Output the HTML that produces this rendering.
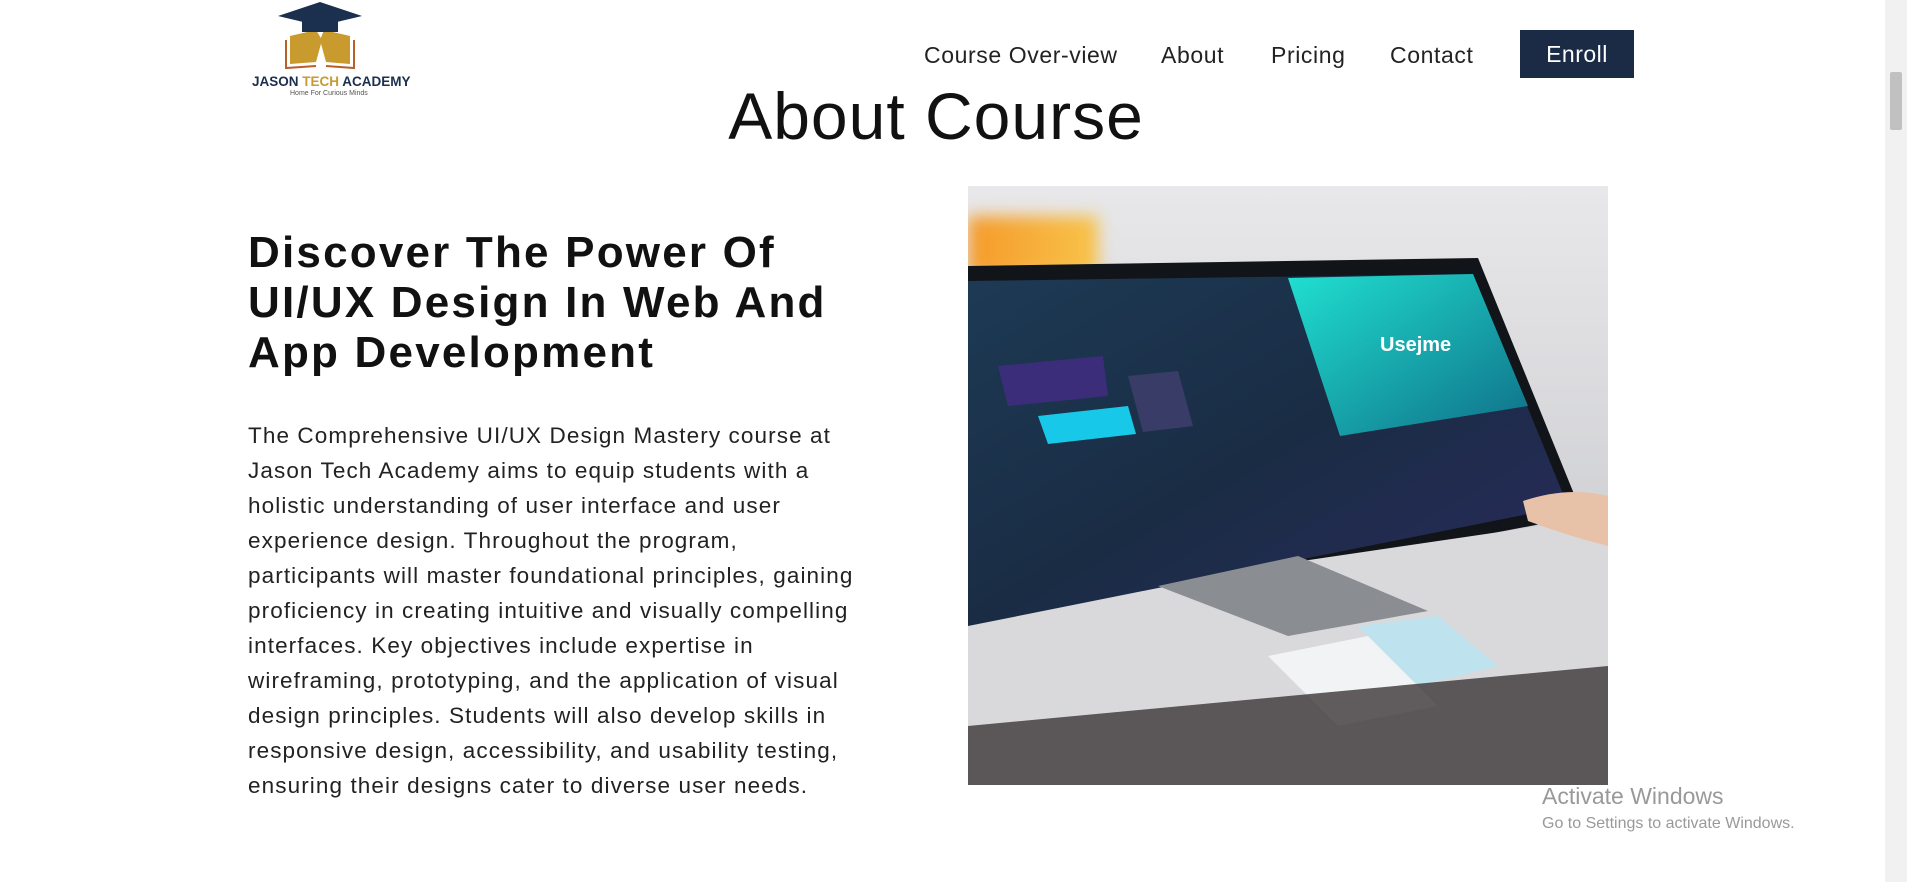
<!DOCTYPE html>
<html><head><meta charset="utf-8"><style>
*{margin:0;padding:0;box-sizing:border-box}
body{width:1907px;height:882px;overflow:hidden;background:#fff;font-family:"Liberation Sans",sans-serif;color:#111;position:relative}
.nav a{position:absolute;top:42px;font-size:23px;color:#222;text-decoration:none;letter-spacing:.6px}
.btn{position:absolute;left:1520px;top:30px;width:114px;height:48px;background:#1b2a45;color:#fff;font-size:23px;display:flex;align-items:center;justify-content:center;letter-spacing:.5px}
h1{position:absolute;left:0;width:1872px;text-align:center;top:78px;font-size:66px;font-weight:400;color:#111;letter-spacing:1px}
h2{position:absolute;left:248px;top:228px;font-size:44px;line-height:50px;font-weight:700;letter-spacing:2.2px;white-space:nowrap}
p{position:absolute;left:248px;top:418px;font-size:22.5px;line-height:35px;color:#222;white-space:nowrap;letter-spacing:1.1px}
.img{position:absolute;left:968px;top:186px;width:640px;height:599px;overflow:hidden;background:linear-gradient(180deg,#e8e8ea 0%,#dcdcdf 30%,#cfd0d3 60%,#3a3438 100%)}
.sb{position:absolute;right:0;top:0;width:22px;height:882px;background:#f1f1f1}
.sb div{position:absolute;left:5px;top:72px;width:12px;height:58px;background:#c1c1c1;border-radius:2px}
</style></head><body>
<svg style="position:absolute;left:250px;top:0" width="170" height="98" viewBox="0 0 170 98">
<path d="M40 36 L66 30 L72 40 L66 62 L40 64 Z" fill="#c99a2e"/>
<path d="M100 36 L74 30 L70 40 L76 62 L100 64 Z" fill="#c99a2e"/>
<path d="M36 40 L36 68 L66 66 M104 40 L104 68 L76 66" stroke="#b8602a" stroke-width="2" fill="none"/>
<path d="M70 2 L112 16 L70 26 L28 16 Z" fill="#1b2f4e"/>
<rect x="52" y="16" width="36" height="16" fill="#1b2f4e"/>
<text x="2" y="86" font-family="Liberation Sans" font-weight="700" font-size="13.5" fill="#1b2f4e">JASON <tspan fill="#c99a2e">TECH</tspan> ACADEMY</text>
<text x="40" y="95" font-family="Liberation Sans" font-size="7" fill="#555">Home For Curious Minds</text>
</svg>
<div class="nav"><a style="left:924px">Course Over-view</a><a style="left:1161px">About</a><a style="left:1271px">Pricing</a><a style="left:1390px">Contact</a></div>
<div class="btn">Enroll</div>
<h1>About Course</h1>
<h2>Discover The Power Of<br>UI/UX Design In Web And<br>App Development</h2>
<p>The Comprehensive UI/UX Design Mastery course at<br>Jason Tech Academy aims to equip students with a<br>holistic understanding of user interface and user<br>experience design. Throughout the program,<br>participants will master foundational principles, gaining<br>proficiency in creating intuitive and visually compelling<br>interfaces. Key objectives include expertise in<br>wireframing, prototyping, and the application of visual<br>design principles. Students will also develop skills in<br>responsive design, accessibility, and usability testing,<br>ensuring their designs cater to diverse user needs.</p>
<div class="img">
<div style="position:absolute;left:0;top:30px;width:130px;height:60px;background:linear-gradient(90deg,#f59a2a,#f8c34a);filter:blur(8px)"></div>
<svg style="position:absolute;left:0;top:0" width="640" height="599" viewBox="0 0 640 599">
<defs><linearGradient id="s" x1="0" y1="0" x2="1" y2="1"><stop offset="0" stop-color="#1d3a55"/><stop offset=".5" stop-color="#1a2c44"/><stop offset="1" stop-color="#2a2a5e"/></linearGradient>
<linearGradient id="t" x1="0" y1="0" x2="1" y2="1"><stop offset="0" stop-color="#20e0d0"/><stop offset="1" stop-color="#0f6f88"/></linearGradient></defs>
<path d="M0 80 L510 72 L615 330 L300 390 L0 460 Z" fill="#111418"/>
<path d="M0 95 L505 88 L600 320 L300 380 L0 440 Z" fill="url(#s)"/>
<path d="M320 92 L505 88 L560 220 L372 250 Z" fill="url(#t)"/>
<text x="412" y="165" font-family="Liberation Sans" font-weight="700" font-size="20" fill="#fff">Usejme</text>
<path d="M70 230 L160 220 L168 248 L80 258 Z" fill="#18c8e8"/>
<path d="M30 180 L135 170 L140 210 L40 220 Z" fill="#3b2d7a"/>
<path d="M160 190 L210 185 L225 240 L175 246 Z" fill="#3a3c68"/>
<path d="M0 440 L300 380 L640 330 L640 599 L0 599 Z" fill="#d9d9dc"/>
<path d="M190 400 L330 370 L460 425 L320 450 Z" fill="#8a8d92"/>
<path d="M300 470 L400 450 L470 520 L370 540 Z" fill="#f2f3f5"/>
<path d="M390 440 L470 430 L530 480 L450 500 Z" fill="#bfe3ee"/>
<path d="M0 540 L640 480 L640 599 L0 599 Z" fill="#3b3436" opacity=".8"/>
<path d="M555 315 Q600 300 640 310 L640 360 Q600 350 560 335 Z" fill="#e7c2a8"/>
</svg>
</div>
<div style="position:absolute;left:1542px;top:783px;font-size:23px;color:#999">Activate Windows</div>
<div style="position:absolute;left:1542px;top:815px;font-size:16px;color:#999">Go to Settings to activate Windows.</div>
<div class="sb"><div></div></div>
</body></html>
